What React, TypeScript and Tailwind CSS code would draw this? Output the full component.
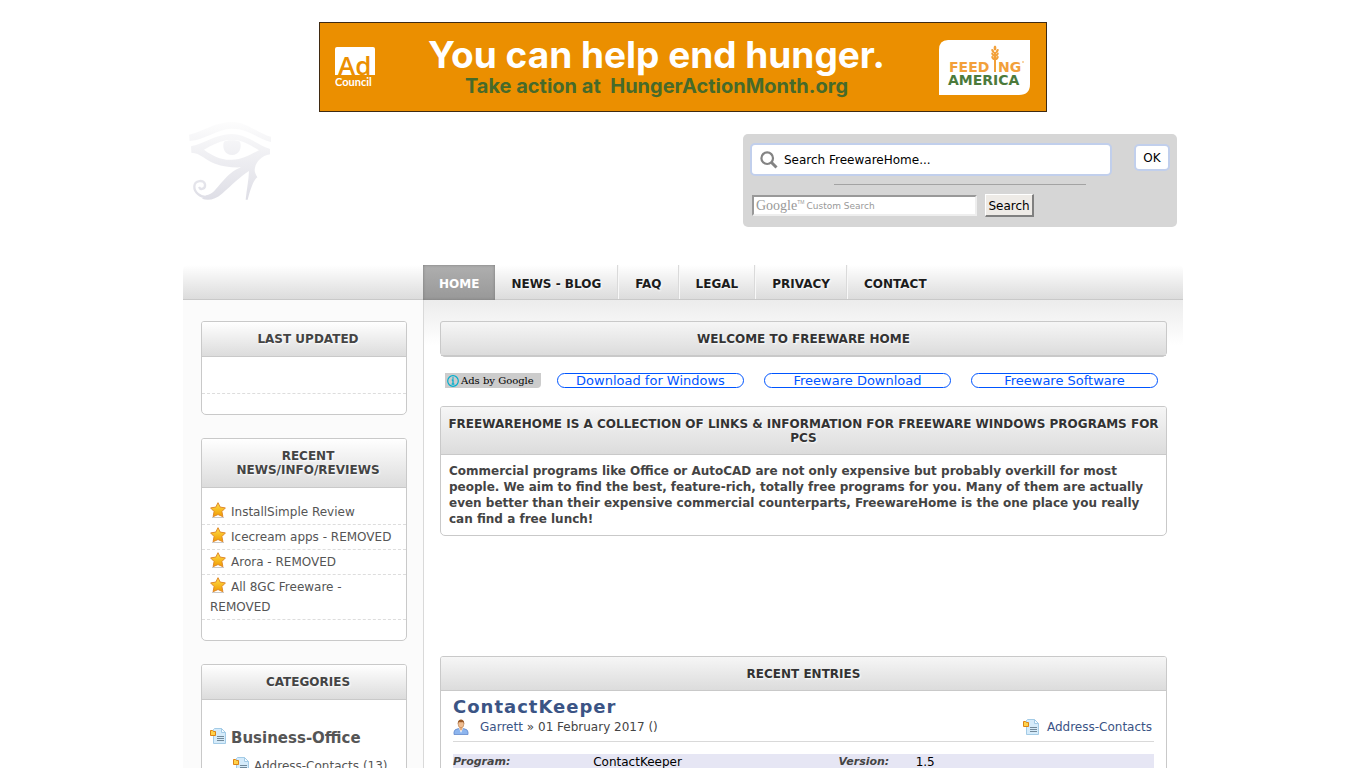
import type { ReactNode } from "react";

const navLinks = ["News - Blog", "FAQ", "Legal", "Privacy", "Contact"];

const reviews = [
  "InstallSimple Review",
  "Icecream apps - REMOVED",
  "Arora - REMOVED",
  "All 8GC Freeware - REMOVED",
];

const adLinks = ["Download for Windows", "Freeware Download", "Freeware Software"];

const headShadow = "[text-shadow:1px_1px_2px_#ffffff]";

function AdBanner() {
  return (
    <a
      href="#"
      className="mx-auto flex h-[90px] w-full max-w-[728px] items-center justify-between border border-[#3f2a12] bg-[#eb8f00] px-[15px]"
    >
      <svg width="40" height="40" viewBox="0 0 40 40" role="img" aria-label="Ad Council">
        <path d="M2 0H38Q40 0 40 2V28H0V2Q0 0 2 0Z" fill="#fff" />
        <text x="3" y="28" fontFamily="Open Sans, sans-serif" fontSize="26" fontWeight="600" fill="#eb8f00">
          Ad
        </text>
        <text x="0" y="39" fontFamily="Lato, sans-serif" fontSize="11" fontWeight="700" fill="#fff" stroke="#eb8f00" strokeWidth="2" paintOrder="stroke">
          Council
        </text>
      </svg>
      <div className="text-center font-['Inter',sans-serif]">
        <div className="text-[37px] leading-[38px] font-bold text-white">You can help end hunger.</div>
        <div className="text-[20px] leading-6 font-bold text-[#466a2a]">
          Take action at&nbsp; HungerActionMonth.org
        </div>
      </div>
      <svg width="93" height="55" viewBox="0 0 93 55" role="img" aria-label="Feeding America">
        <path d="M10 0H92V44Q92 55 81 55H1V10Q1 0 10 0Z" fill="#fff" />
        <g fill="#f2a03a">
          <rect x="56" y="12" width="2" height="20" />
          <ellipse cx="57" cy="8" rx="1.4" ry="2.6" />
          <ellipse cx="54.8" cy="11" rx="1.2" ry="2.2" transform="rotate(-30 54.8 11)" />
          <ellipse cx="59.2" cy="11" rx="1.2" ry="2.2" transform="rotate(30 59.2 11)" />
          <ellipse cx="54.8" cy="14.5" rx="1.2" ry="2.2" transform="rotate(-30 54.8 14.5)" />
          <ellipse cx="59.2" cy="14.5" rx="1.2" ry="2.2" transform="rotate(30 59.2 14.5)" />
          <ellipse cx="54.8" cy="18" rx="1.2" ry="2.2" transform="rotate(-30 54.8 18)" />
          <ellipse cx="59.2" cy="18" rx="1.2" ry="2.2" transform="rotate(30 59.2 18)" />
        </g>
        <g fontFamily="DejaVu Sans, sans-serif" fontWeight="700" fontSize="14">
          <text x="11" y="32" fill="#f2a03a">FEED</text>
          <text x="60" y="32" fill="#f2a03a">NG</text>
          <text x="10" y="45" fill="#4c7a3b">AMERICA</text>
        </g>
        <circle cx="85" cy="22" r="0.8" fill="#f2a03a" />
      </svg>
    </a>
  );
}

function EyeLogo() {
  return (
    <svg width="84" height="80" viewBox="24 15 252 240" role="img" aria-label="Freeware Home">
      <defs>
        <linearGradient id="eye" x1="0" y1="18" x2="0" y2="255" gradientUnits="userSpaceOnUse">
          <stop offset="0" stopColor="#fdfdfd" />
          <stop offset="1" stopColor="#dedee6" />
        </linearGradient>
      </defs>
      <g fill="url(#eye)">
        <path d="M27 59C70 50 100 22 155 20C200 20 238 58 273 65V81C235 72 205 40 155 41C110 42 75 75 29 78Z" />
        <path
          fillRule="evenodd"
          d="M33 94C75 85 105 58 155 57C200 57 235 92 270 102V118C245 122 229 140 225 158C222 170 227 178 232 187C219 196 211 226 203 254H197C200 225 206 195 207 168C180 185 155 211 126 236C105 254 85 258 66 251L78 241C98 240 109 219 128 199C145 180 160 166 183 157C155 158 130 155 105 146C75 135 62 114 34 113ZM72 104C98 123 125 136 155 134C190 134 212 117 237 106C212 91 190 78 170 76H138C115 80 95 92 72 104Z"
        />
        <path d="M132 80C142 74 170 74 180 80C187 98 177 120 156 120C135 120 125 98 132 80Z" />
      </g>
      <path
        d="M86 246C60 250 42 230 43 214C44 196 72 192 75 208C77 221 62 227 57 216"
        fill="none"
        stroke="url(#eye)"
        strokeWidth="7"
      />
    </svg>
  );
}

function StarIcon() {
  return (
    <svg className="mr-[5px] inline-block align-[-2px]" width="16" height="16" viewBox="0 0 16 16" aria-hidden="true">
      <defs>
        <linearGradient id="star" x1="0" y1="0" x2="0" y2="1">
          <stop offset="0" stopColor="#ffe04a" />
          <stop offset="1" stopColor="#f09a00" />
        </linearGradient>
      </defs>
      <path d="M2 15.5H14" stroke="#c9c9c9" />
      <path
        d="M8 .7L10.2 5.1L15.4 5.9L11.9 9.5L12.9 14.7L8 12.5L3.1 14.7L4.1 9.5L.6 5.9L5.8 5.1Z"
        fill="url(#star)"
        stroke="#e08a2c"
        strokeLinejoin="round"
      />
    </svg>
  );
}

function CategoryIcon({ className = "" }: { className?: string }) {
  return (
    <svg className={`inline-block ${className}`} width="16" height="16" viewBox="0 0 16 16" aria-hidden="true">
      <path d="M4.5 .5H11.5L15.5 4.5V15.5H3.5V1.5Z" fill="#d5ebfa" stroke="#a3cbe6" />
      <path d="M11.5 .5V4.5H15.5Z" fill="#f5fbff" stroke="#a3cbe6" />
      <path d="M7 8.5H14M7 10.5H14M7 12.5H14" stroke="#71899a" />
      <path d="M.5 2.5H2.5L3.5 3.5H5.5V7.5H.5Z" fill="#ffd24a" stroke="#dc8415" />
    </svg>
  );
}

function UserIcon() {
  return (
    <svg width="16" height="16" viewBox="0 0 16 16" aria-hidden="true">
      <path d="M1 15.5V13Q1 10.3 5.5 9.6H10.5Q15 10.3 15 13V15.5Z" fill="#8db5ee" stroke="#6389cc" strokeWidth=".8" />
      <path d="M6 9L8 14L10 9Z" fill="#fff" />
      <path d="M6.5 7.5H9.5V10L8 12L6.5 10Z" fill="#e8ad7c" />
      <ellipse cx="8" cy="5" rx="2.9" ry="3.8" fill="#f0bd90" stroke="#a86c3d" strokeWidth=".5" />
      <path d="M4.8 5C4.2-.9 11.8-.9 11.2 5L10.2 3Q8 3.6 5.8 3Z" fill="#9b5a28" />
    </svg>
  );
}

function SearchPanel() {
  return (
    <div className="w-[434px] rounded-[5px] bg-[#d6d6d6] px-[7px] pt-[9px] pb-2.5">
      <form className="flex items-start justify-between">
        <label className="flex h-[33px] w-[362px] items-center rounded-[5px] border-2 border-[#c1cfec] bg-white px-2">
          <svg width="18" height="18" viewBox="0 0 18 18" fill="none" stroke="#838383" aria-hidden="true">
            <circle cx="7.2" cy="7.2" r="5.8" strokeWidth="2.2" />
            <path d="M11.5 11.5L16.5 16.5" strokeWidth="3" />
          </svg>
          <input
            type="text"
            aria-label="Search FreewareHome"
            defaultValue="Search FreewareHome..."
            className="ml-1.5 min-w-0 flex-1 text-black outline-none"
          />
        </label>
        <button type="button" className="mt-px h-[27px] w-9 rounded-[5px] border-2 border-[#c1cfec] bg-white pt-px text-black">
          OK
        </button>
      </form>
      <hr className="mx-auto mt-2 w-[252px] border-[#a3a3a3]" />
      <form className="mt-[9px] flex items-center gap-2 pl-0.5">
        <div className="relative h-[21px] w-[225px]">
          <input
            type="text"
            aria-label="Google Custom Search"
            className="block h-full w-full border-2 border-t-[#999999] border-r-[#eeeeee] border-b-[#eeeeee] border-l-[#999999] bg-white px-1 outline-none"
          />
          <div className="pointer-events-none absolute inset-0 flex items-center pl-1 text-[#999999]">
            <span className="font-['Liberation_Serif',serif] text-[14px] leading-4">Google</span>
            <sup className="top-[-4px] font-['Liberation_Sans',sans-serif] text-[5px]">TM</sup>
            <span className="ml-0.5 text-[9px]">Custom Search</span>
          </div>
        </div>
        <button
          type="button"
          className="h-[23px] w-[49px] border-t border-r-2 border-b-2 border-l border-t-white border-r-[#808080] border-b-[#808080] border-l-white bg-[#eeebe7] pt-px text-black"
        >
          Search
        </button>
      </form>
    </div>
  );
}

function Widget({ title, children }: { title: string; children: ReactNode }) {
  return (
    <section className="mb-[23px] rounded-t-[3px] rounded-b-[5px] border border-[#c9c9c9] bg-white">
      <h3
        className={`rounded-t-[2px] border-b border-[#c9c9c9] bg-linear-to-b from-white to-[#dcdcdc] py-2.5 pr-2 pl-4 text-center leading-[14px] font-bold text-[#444444] uppercase ${headShadow}`}
      >
        {title}
      </h3>
      {children}
    </section>
  );
}

function PanelTitle({ children }: { children: ReactNode }) {
  return (
    <h2
      className={`rounded-t-[2px] border-b border-[#c9c9c9] bg-linear-to-b from-[#f6f6f6] to-[#dcdcdc] px-1.5 pt-2.5 pb-[9px] text-center leading-[14px] font-bold text-[#333333] uppercase ${headShadow}`}
    >
      {children}
    </h2>
  );
}

export default function App() {
  return (
    <div className="min-h-screen bg-white pt-[22px] font-['DejaVu_Sans',sans-serif] text-[12px] leading-5 text-[#444444]">
      <AdBanner />

      <div className="mx-auto max-w-[1000px]">
        <header className="flex h-[153px] items-start justify-between pr-1.5 pl-[5px]">
          <a href="#" className="mt-2">
            <EyeLogo />
          </a>
          <div className="mt-[22px]">
            <SearchPanel />
          </div>
        </header>

        <nav className="flex h-[35px] rounded-t-[5px] border-b border-[#c9c9c9] bg-linear-to-b from-white to-[#dcdcdc] pl-60 font-bold uppercase">
          <a
            href="#"
            className="flex h-[35px] items-center bg-linear-to-b from-[#afafaf] to-[#989898] px-4 pt-0.5 text-white shadow-[inset_0_0_3px_#777777]"
          >
            Home
          </a>
          {navLinks.map((link, i) => (
            <a
              key={link}
              href="#"
              className={`flex items-center px-4 pt-1 text-[#1c1c1c] ${headShadow} ${
                i < navLinks.length - 1 ? "mr-px border-r border-[#dadada] shadow-[1px_0_0_#f8f8f8]" : ""
              }`}
            >
              {link}
            </a>
          ))}
        </nav>

        <div className="flex">
          <aside className="w-[241px] shrink-0 border-r border-[#d9d9d9] bg-[#fbfbfb] pt-[21px] pr-4 pl-[18px]">
            <Widget title="Last Updated">
              <ul className="pt-3 pb-5">
                <li className="h-[25px] border-b border-dashed border-[#dddddd]" />
              </ul>
            </Widget>

            <Widget title="Recent News/Info/Reviews">
              <ul className="pt-3 pb-5">
                {reviews.map((name) => (
                  <li key={name} className="border-b border-dashed border-[#dddddd] px-2 py-0.5 text-[#555555]">
                    <StarIcon />
                    <a href="#">{name}</a>
                  </li>
                ))}
              </ul>
            </Widget>

            <Widget title="Categories">
              <ul className="px-2 pt-7 pb-5 text-[#555555]">
                <li>
                  <CategoryIcon className="mr-[5px] align-[-1px]" />
                  <a href="#" className="text-[15px] font-bold">
                    Business-Office
                  </a>
                  <ul className="mt-[7px] pl-[23px]">
                    <li>
                      <CategoryIcon className="mr-[5px] align-[-3px]" />
                      <a href="#">Address-Contacts</a> (13)
                    </li>
                  </ul>
                </li>
              </ul>
            </Widget>
          </aside>

          <main className="min-w-0 flex-1 bg-linear-to-b from-[#ececec] to-white to-[45px] px-4 pt-[21px] pb-5">
            <section className="rounded-t-[3px] rounded-b-[5px] border border-[#c9c9c9] bg-[#c9c9c9]">
              <PanelTitle>Welcome to Freeware Home</PanelTitle>
            </section>

            <div className="mt-4 flex h-[15px] items-center pr-[9px] pl-[5px] leading-[15px]">
              <a
                href="#"
                className="mr-4 flex h-[15px] w-24 shrink-0 items-center rounded-br-[4px] bg-[#cccccc] font-['DejaVu_Serif',serif] text-[10px] text-black"
              >
                <svg className="mx-[2px]" width="12" height="12" viewBox="0 0 12 12" fill="none" stroke="#00aecd" aria-hidden="true">
                  <circle cx="6" cy="6" r="5.3" strokeWidth="1.2" />
                  <path d="M6 2.3V3.8M4.8 5H6V9.2M4.6 9.2H7.4" strokeWidth="1.3" />
                </svg>
                <span>Ads by Google</span>
              </a>
              <div className="flex flex-1 gap-5">
                {adLinks.map((text) => (
                  <a
                    key={text}
                    href="#"
                    className="h-[15px] flex-1 rounded-full border border-[#0055ff] bg-white text-center text-[13px] leading-[13px] text-[#0055ff]"
                  >
                    {text}
                  </a>
                ))}
              </div>
            </div>

            <section className="mt-[18px] rounded-t-[3px] rounded-b-[5px] border border-[#c9c9c9] bg-white">
              <PanelTitle>
                FreewareHome is a collection of links &amp; information for freeware Windows programs for PCs
              </PanelTitle>
              <p className="p-2 leading-4 font-bold">
                Commercial programs like Office or AutoCAD are not only expensive but probably overkill for most
                people. We aim to find the best, feature-rich, totally free programs for you. Many of them are
                actually even better than their expensive commercial counterparts, FreewareHome is the one place you
                really can find a free lunch!
              </p>
            </section>

            <section className="mt-[120px] rounded-t-[3px] rounded-b-[5px] border border-[#c9c9c9] bg-white">
              <PanelTitle>Recent Entries</PanelTitle>
              <article className="px-3 pt-1 pb-4">
                <h2 className="text-[18px] leading-6 font-bold tracking-[1px] text-[#3b5485]">
                  <a href="#">ContactKeeper</a>
                </h2>
                <div className="flex items-center border-b border-[#d9d9d9] pb-1.5 leading-4">
                  <UserIcon />
                  <a href="#" className="mr-1 ml-[11px] text-[#3b5485]">
                    Garrett
                  </a>
                  <span>» 01 February 2017 ()</span>
                  <a href="#" className="mr-0.5 ml-auto flex items-center gap-2 text-[#3b5485]">
                    <CategoryIcon />
                    Address-Contacts
                  </a>
                </div>
                <table className="mt-3 w-full table-fixed text-left leading-4">
                  <tbody>
                    <tr className="bg-[#e6e6f4]">
                      <th className="w-[20%] text-[11px] font-bold italic">Program:</th>
                      <td className="w-[35%] text-black">ContactKeeper</td>
                      <th className="w-[11%] text-[11px] font-bold italic">Version:</th>
                      <td className="text-black">1.5</td>
                    </tr>
                  </tbody>
                </table>
              </article>
            </section>
          </main>
        </div>
      </div>
    </div>
  );
}
